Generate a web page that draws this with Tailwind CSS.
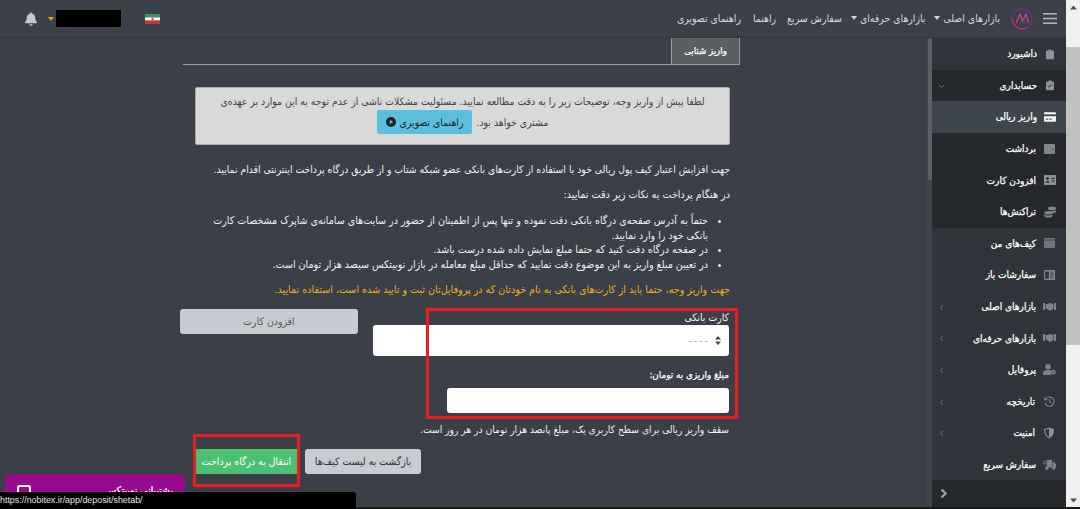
<!DOCTYPE html>
<html lang="fa" dir="rtl">
<head>
    <meta charset="UTF-8">
    <title>نوبیتکس - واریز ریالی</title>
    <script src="https://cdn.jsdelivr.net/npm/@tailwindcss/browser@4"></script>
</head>
<body class="w-[1080px] h-[509px] overflow-hidden bg-[#3a3f48] font-['DejaVu_Sans_Condensed','DejaVu_Sans',sans-serif] text-[10.4px]">
    <div class="relative flex h-[509px]">
        <!-- Browser scrollbar -->
        <div class="w-[14px] shrink-0 flex flex-col items-center bg-[#f1f1f1] h-[507px]">
            <div class="h-[14px] flex items-center text-[#505050]">
                <svg width="7" height="5" viewBox="0 0 7 5"><path d="M3.5 0.5 7 4.5H0z" fill="currentColor"/></svg>
            </div>
            <div class="mt-[33px] w-[14px] h-[298px] bg-[#c1c1c1]"></div>
            <div class="mt-auto h-[14px] flex items-center text-[#505050]">
                <svg width="7" height="5" viewBox="0 0 7 5"><path d="M3.5 4.5 7 0.5H0z" fill="currentColor"/></svg>
            </div>
        </div>

        <div class="w-[1066px] h-[507px] flex flex-col overflow-hidden">
            <!-- Top bar -->
            <header class="h-[38px] shrink-0 flex items-center border-b border-[#33383f] bg-[#3b4049] text-[#d5d8dc]">
                <svg class="mr-[9px]" width="14" height="11" viewBox="0 0 14 11" fill="#aeb3b9"><rect width="14" height="1.6"/><rect y="4.7" width="14" height="1.6"/><rect y="9.4" width="14" height="1.6"/></svg>
                <svg class="mr-[10px]" width="22" height="22" viewBox="0 0 22 22" fill="none"><circle cx="11" cy="11" r="10" stroke="#6d2f8f" stroke-width="1.4"/><path d="M1.5 11a10 10 0 0 0 15 8.5" stroke="#c2267e" stroke-width="1.4"/><path d="M5 15 9 6l2.5 7L15 6l2.5 9" stroke="#d43c96" stroke-width="1.3"/></svg>
                <nav class="flex items-center mr-[11px] text-[10.4px] whitespace-nowrap">
                    <span>بازارهای اصلی</span>
                    <span class="mr-[3px] w-0 h-0 border-x-[3px] border-x-transparent border-t-[4px] border-t-[#d5d8dc]"></span>
                    <span class="mr-[9px]">بازارهای حرفه‌ای</span>
                    <span class="mr-[3px] w-0 h-0 border-x-[3px] border-x-transparent border-t-[4px] border-t-[#d5d8dc]"></span>
                    <span class="mr-[9px]">سفارش سریع</span>
                    <span class="mr-[11px]">راهنما</span>
                    <span class="mr-[12px]">راهنمای تصویری</span>
                </nav>
                <div class="mr-auto flex items-center ml-[25px]">
                    <svg class="ml-[24px]" width="15" height="10" viewBox="0 0 15 10"><rect width="15" height="3.4" fill="#3f9160"/><rect y="3.4" width="15" height="3.2" fill="#fff"/><rect y="6.6" width="15" height="3.4" fill="#c8363a"/><rect x="6.6" y="3.8" width="1.8" height="2.4" fill="#c8363a"/></svg>
                    <div class="w-[65px] h-[17px] bg-black"></div>
                    <span class="mr-[2px] w-0 h-0 border-x-[3px] border-x-transparent border-t-[4px] border-t-[#e0a526]"></span>
                    <svg class="mr-[11px]" width="12" height="14" viewBox="0 0 448 512" fill="#c3c7cc"><path d="M224 512a64 64 0 0 0 64-64H160a64 64 0 0 0 64 64zm215-150c-19-21-55-52-55-154 0-78-54-140-128-155V32a32 32 0 0 0-64 0v21C118 68 64 130 64 208c0 102-36 133-55 154a31 31 0 0 0 23 54h384a31 31 0 0 0 23-54z"/></svg>
                </div>
            </header>

            <div class="flex flex-1 min-h-0">
                <!-- Sidebar -->
                <aside class="w-[134px] shrink-0 flex flex-col bg-[#2f343a] text-white [-webkit-text-stroke:0.25px_white] text-[10px]">
                    <div class="h-[31.6px] flex items-center pr-[12px] gap-[9px]">
                        <svg width="8" height="12" viewBox="0 0 10 13" fill="#8c9298"><path d="M1 2h2.2V1h3.6v1H9a1 1 0 0 1 1 1v9a1 1 0 0 1-1 1H1a1 1 0 0 1-1-1V3a1 1 0 0 1 1-1z"/></svg>
                        <span>داشبورد</span>
                    </div>
                    <div class="h-[31.6px] flex items-center pr-[12px] gap-[9px] bg-[#25282d] relative">
                        <svg width="8" height="12" viewBox="0 0 10 13" fill="#8c9298"><path d="M1 2h2.2V1h3.6v1H9a1 1 0 0 1 1 1v9a1 1 0 0 1-1 1H1a1 1 0 0 1-1-1V3a1 1 0 0 1 1-1z"/><path d="M2.5 7.5 4.2 9.2 7.6 5.8" stroke="#25282d" stroke-width="1.2" fill="none"/></svg>
                        <span>حسابداری</span>
                        <svg class="absolute left-[6px] top-[14px]" width="7" height="5" viewBox="0 0 7 5" fill="none"><path d="M1 1l2.5 2.5L6 1" stroke="#6f757b"/></svg>
                    </div>
                    <div class="h-[31.6px] flex items-center pr-[10px] gap-[7px] bg-[#3f454d]">
                        <svg width="12" height="10" viewBox="0 0 14 11"><rect width="14" height="11" rx="1.2" fill="#f2f3f4"/><rect y="2.4" width="14" height="2.2" fill="#3f454d"/><rect x="2" y="7.4" width="3" height="1.2" fill="#3f454d"/><rect x="6" y="7.4" width="3" height="1.2" fill="#3f454d"/></svg>
                        <span>واریز ریالی</span>
                    </div>
                    <div class="h-[31.6px] flex items-center pr-[11px] gap-[8px] bg-[#25282d]">
                        <svg width="11" height="10" viewBox="0 0 11 10" fill="#7e848a"><path d="M1 0h9a1 1 0 0 1 1 1v8a1 1 0 0 1-1 1H1a1 1 0 0 1-1-1V1a1 1 0 0 1 1-1z"/><circle cx="8.7" cy="5.4" r=".7" fill="#25282d"/></svg>
                        <span>برداشت</span>
                    </div>
                    <div class="h-[31.6px] flex items-center pr-[10px] gap-[8px] bg-[#25282d]">
                        <svg width="12" height="10" viewBox="0 0 12 10"><rect width="12" height="10" rx="1" fill="#8c9298"/><circle cx="3.6" cy="3.6" r="1.4" fill="#25282d"/><path d="M1.6 7.6c.4-2 3.6-2 4 0zM7.2 3h3.4v1H7.2zM7.2 5.4h3.4v1H7.2z" fill="#25282d"/></svg>
                        <span>افزودن کارت</span>
                    </div>
                    <div class="h-[31.6px] flex items-center pr-[10px] gap-[8px] bg-[#25282d]">
                        <svg width="12" height="12" viewBox="0 0 12 12" fill="#7e848a"><ellipse cx="8" cy="2.4" rx="4" ry="1.9"/><path d="M8 5.2c1.5 0 3-.4 4-1.2v1.6C12 6.6 10.4 7.2 9 7.4 8.6 6.4 7.4 5.6 5.6 5.4L8 5.2z"/><ellipse cx="4.4" cy="6.7" rx="4.2" ry="1.8"/><path d="M.2 8.2c1 .9 2.6 1.2 4.2 1.2s3.2-.3 4.2-1.2v1.6c0 1-1.9 1.8-4.2 1.8S.2 10.8.2 9.8z"/></svg>
                        <span>تراکنش‌ها</span>
                    </div>
                    <div class="h-[31.6px] flex items-center pr-[11px] gap-[8px]">
                        <svg width="11" height="10" viewBox="0 0 11 10" fill="#6f757b"><path d="M1 0h9a1 1 0 0 1 1 1v8a1 1 0 0 1-1 1H1a1 1 0 0 1-1-1V1a1 1 0 0 1 1-1z"/><rect x="0" y="1.7" width="11" height=".7" fill="#2f343a"/></svg>
                        <span>کیف‌های من</span>
                    </div>
                    <div class="h-[31.6px] flex items-center pr-[11px] gap-[8px]">
                        <svg width="11" height="10" viewBox="0 0 11 10"><rect width="11" height="10" rx=".8" fill="#7e848a"/><rect x="1.2" y="1.6" width="3.6" height="7" fill="#2f343a"/><rect x="6" y="1.6" width="3.8" height="7" fill="#5f656b"/></svg>
                        <span>سفارشات باز</span>
                    </div>
                    <div class="h-[31.6px] flex items-center pr-[10px] gap-[7px] relative">
                        <svg width="13" height="8" viewBox="0 0 13 8" fill="#7e848a"><rect width="2" height="7"/><rect x="11" width="2" height="7"/><path d="M2.6 1h2.2l1.7-1 2 .6L10.4 1v4.4L7.4 8 2.6 5.2z"/></svg>
                        <span>بازارهای اصلی</span>
                        <svg class="absolute left-[7px] top-[13px]" width="5" height="7" viewBox="0 0 5 7" fill="none"><path d="M4 1 1.5 3.5 4 6" stroke="#6f757b"/></svg>
                    </div>
                    <div class="h-[31.6px] flex items-center pr-[10px] gap-[7px] relative">
                        <svg width="13" height="8" viewBox="0 0 13 8" fill="#7e848a"><rect width="2" height="7"/><rect x="11" width="2" height="7"/><path d="M2.6 1h2.2l1.7-1 2 .6L10.4 1v4.4L7.4 8 2.6 5.2z"/></svg>
                        <span>بازارهای حرفه‌ای</span>
                        <svg class="absolute left-[7px] top-[13px]" width="5" height="7" viewBox="0 0 5 7" fill="none"><path d="M4 1 1.5 3.5 4 6" stroke="#6f757b"/></svg>
                    </div>
                    <div class="h-[31.6px] flex items-center pr-[10px] gap-[7px] relative">
                        <svg width="13" height="11" viewBox="0 0 13 11" fill="#7e848a"><circle cx="5" cy="2.8" r="2.8"/><path d="M0 11V9.2C0 7.4 1.6 6.2 3.2 6.2h3.2c.6 0 1.2.1 1.6.4V11z"/><circle cx="10.4" cy="8.2" r="2.4"/><circle cx="10.4" cy="8.2" r=".8" fill="#2f343a"/></svg>
                        <span>پروفایل</span>
                        <svg class="absolute left-[7px] top-[13px]" width="5" height="7" viewBox="0 0 5 7" fill="none"><path d="M4 1 1.5 3.5 4 6" stroke="#6f757b"/></svg>
                    </div>
                    <div class="h-[31.6px] flex items-center pr-[11px] gap-[9px] relative">
                        <svg width="11" height="11" viewBox="0 0 11 11" fill="none" stroke="#7e848a" stroke-width="1.2"><path d="M2.2 2.4A4.6 4.6 0 1 1 1 6.6"/><path d="M5.6 3v2.8l1.8 1.2M0.8 1.2v2.4h2.4"/></svg>
                        <span>تاریخچه</span>
                        <svg class="absolute left-[7px] top-[13px]" width="5" height="7" viewBox="0 0 5 7" fill="none"><path d="M4 1 1.5 3.5 4 6" stroke="#6f757b"/></svg>
                    </div>
                    <div class="h-[31.6px] flex items-center pr-[12px] gap-[9px] relative">
                        <svg width="10" height="12" viewBox="0 0 11 12" fill="#8c9298"><path d="M5.5 0 11 2c0 5-1.6 8-5.5 10C1.6 10 0 7 0 2z"/><path d="M5.5 1.4V10.6C2.8 9 1.4 6.8 1.2 2.8z" fill="#2f343a"/></svg>
                        <span>امنیت</span>
                        <svg class="absolute left-[7px] top-[13px]" width="5" height="7" viewBox="0 0 5 7" fill="none"><path d="M4 1 1.5 3.5 4 6" stroke="#6f757b"/></svg>
                    </div>
                    <div class="h-[31.6px] flex items-center pr-[10px] gap-[7px]">
                        <svg width="13" height="10" viewBox="0 0 13 10" fill="#7e848a"><path d="M3.6 0h5.6v7.6H3.6zM9.8 2.2h1.6L13 4.2v3.4H9.8z"/><circle cx="3.8" cy="8.2" r="1.6"/><circle cx="10.6" cy="8.2" r="1.6"/><rect y="1.4" width="3" height=".9"/><rect y="3.4" width="3" height=".9"/></svg>
                        <span>سفارش سریع</span>
                    </div>
                    <div class="flex-1 flex items-center bg-[#25282d] pl-[8px] justify-end">
                        <svg width="8" height="11" viewBox="0 0 8 11" fill="none"><path d="M1.6 1.4l4 4.1-4 4.1" stroke="#9da2a8" stroke-width="2.2"/></svg>
                    </div>
                </aside>

                <!-- Inner scrollbar -->
                <div class="w-[5px] shrink-0 bg-[#3f454d]">
                    <div class="w-[4px] h-[142px] rounded-[2px] bg-[#5b6068]"></div>
                </div>

                <!-- Main -->
                <main class="flex-1 pr-[187px] text-[#f0f1f2]">
                    <div class="w-[557px]">
                        <div class="h-[27px] border-b border-[#9a9da2]">
                            <div class="w-[69px] h-[27px] flex items-center justify-center bg-[#5b5e63] border-x border-b border-[#9a9da2] text-white [-webkit-text-stroke:0.25px_white] text-[9.6px]">واریز شتابی</div>
                        </div>

                        <div class="mr-[10px] mt-[22px] w-[535px] h-[58px] rounded-[2px] border border-[#aaa] bg-[#d9d9d9] text-[#444] px-[8px] pt-[3px] text-center leading-[20px] text-[10.36px]">
                            <div class="whitespace-nowrap">لطفا پیش از واریز وجه، توضیحات زیر را به دقت مطالعه نمایید. مسئولیت مشکلات ناشی از عدم توجه به این موارد بر عهده‌ی</div>
                            <div class="flex items-center justify-center gap-[4px] mt-[-1px]">
                                <span>مشتری خواهد بود.</span>
                                <span class="h-[24px] px-[9px] flex items-center gap-[4px] rounded-[2px] bg-[#5bc0de] text-[#222]">راهنمای تصویری
                                    <svg width="10" height="10" viewBox="0 0 10 10"><circle cx="5" cy="5" r="5" fill="#222"/><path d="M3.8 2.8 7.2 5 3.8 7.2z" fill="#5bc0de"/></svg>
                                </span>
                            </div>
                        </div>

                        <div class="mr-[10px] mt-[16px] h-[16px] leading-[16px] whitespace-nowrap text-[10.3px]">جهت افزایش اعتبار کیف پول ریالی خود با استفاده از کارت‌های بانکی عضو شبکه شتاب و از طریق درگاه پرداخت اینترنتی اقدام نمایید.</div>
                        <div class="mr-[10px] mt-[10px] h-[16px] leading-[16px] whitespace-nowrap text-[10.7px]">در هنگام پرداخت به نکات زیر دقت نمایید:</div>

                        <ul class="mr-[32px] mt-[10px] w-[505px] list-disc leading-[14.6px] text-[10.6px]">
                            <li>حتماً به آدرس صفحه‌ی درگاه بانکی دقت نموده و تنها پس از اطمینان از حضور در سایت‌های سامانه‌ی شاپرک مشخصات کارت<br>بانکی خود را وارد نمایید.</li>
                            <li class="whitespace-nowrap">در صفحه درگاه دقت کنید که حتما مبلغ نمایش داده شده درست باشد.</li>
                            <li class="whitespace-nowrap">در تعیین مبلغ واریز به این موضوع دقت نمایید که حداقل مبلغ معامله در بازار نوبیتکس سیصد هزار تومان است.</li>
                        </ul>

                        <div class="mr-[10px] mt-[11px] h-[16px] leading-[16px] whitespace-nowrap text-[#f0ad1e] text-[10.65px]">جهت واریز وجه، حتما باید از کارت‌های بانکی به نام خودتان که در پروفایل‌تان ثبت و تایید شده است، استفاده نمایید.</div>

                        <div class="flex items-start mr-[11px] mt-[11px]">
                            <div class="w-[356px] shrink-0">
                                <label class="block h-[16px] leading-[16px]">کارت بانکی</label>
                                <div class="h-[31px] rounded-[3px] bg-white flex items-center pr-[8px] gap-[5px] text-[#aaa]">
                                    <svg width="6" height="9" viewBox="0 0 6 9" fill="#444"><path d="M3 0 6 3.4H0zM3 9 0 5.6h6z"/></svg>
                                    <span dir="ltr" class="tracking-[2px]">----</span>
                                </div>
                                <label class="block mt-[11px] h-[16px] leading-[16px] text-white [-webkit-text-stroke:0.25px_white] text-[9.8px]">مبلغ واریزی به تومان:</label>
                                <div class="mt-[5px] w-[282px] h-[25px] rounded-[3px] bg-white"></div>
                            </div>
                            <button class="shrink-0 mr-[15px] w-[178px] h-[25px] rounded-[3px] bg-[#c8ccd2] text-[#555] text-[10.4px]">افزودن کارت</button>
                        </div>

                        <div class="mr-[11px] mt-[9px] h-[16px] leading-[16px] whitespace-nowrap text-[10.2px]">سقف واریز ریالی برای سطح کاربری یک، مبلغ پانصد هزار تومان در هر روز است.</div>

                        <div class="flex justify-end mt-[11px] ml-[12px] gap-[5px]">
                            <button class="w-[116px] h-[25px] rounded-[3px] bg-[#c8ccd2] text-[#333] text-[10.4px]">بازگشت به لیست کیف‌ها</button>
                            <button class="w-[105px] h-[25px] rounded-[1px] bg-[#4cbf73] border-r-[2px] border-r-[#7a8f5a] text-white text-[10.4px]">انتقال به درگاه پرداخت</button>
                        </div>
                    </div>
                </main>
            </div>
        </div>

        <!-- Red annotations drawn over the screenshot -->
        <div class="absolute left-[426px] top-[308px] w-[312px] h-[111px] border-[3px] border-[#ed1c24]"></div>
        <div class="absolute left-[193px] top-[434px] w-[107px] h-[53px] border-[3px] border-[#ed1c24]"></div>

        <!-- Chat widget, cut off by the status bubble -->
        <div class="absolute left-[5px] top-[474px] w-[180px] h-[35px] rounded-t-[6px] bg-[#980b8d] text-white text-[10.4px] [-webkit-text-stroke:0.25px_white] leading-[12px] flex items-start justify-between px-[12px] pt-[11px]">
            <span class="mt-[-1px]">پشتیبانی نوبیتکس</span>
            <span class="w-[14px] h-[14px] rounded-[3px] border-2 border-white"></span>
        </div>

        <!-- Link status bubble -->
        <div dir="ltr" class="absolute left-0 top-[492px] w-[356px] h-[17px] rounded-tr-[3px] bg-black text-[#e4e4e4] font-['Liberation_Sans',sans-serif] text-[8.9px] leading-[17px]">https://nobitex.ir/app/deposit/shetab/</div>
        <div class="absolute left-[356px] right-0 bottom-0 h-[2px] bg-[#1a1a1a]"></div>
    </div>
</body>
</html>
